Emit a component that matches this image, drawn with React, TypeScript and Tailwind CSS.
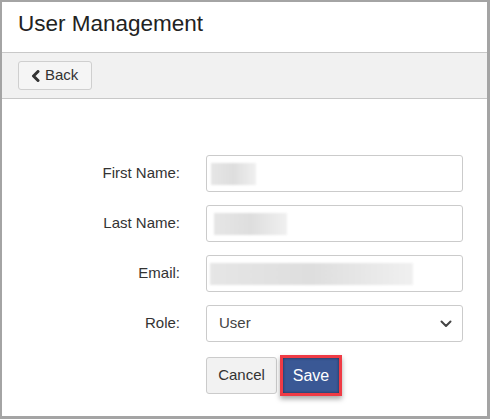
export default function App() {
  const rows = [
    { label: "First Name:", blur: "ml-[4px] w-[45px]" },
    { label: "Last Name:", blur: "ml-[7px] w-[73px]" },
    { label: "Email:", blur: "ml-[3px] w-[203px]" },
  ];

  return (
    <div
      className="w-[490px] h-[419px] bg-white border-[#a4a4a4] border-t-2 border-l-2 border-r-[3px] border-b-[3px] flex flex-col text-[#333]"
      style={{ fontFamily: '"Liberation Sans", Arial, sans-serif' }}
    >
      {/* Header */}
      <header className="h-[51px] shrink-0 flex items-center pl-4 border-b border-[#c8c8c8]">
        <h1 className="text-[22.5px] text-[#222] leading-none -mt-[5px]">User Management</h1>
      </header>

      {/* Toolbar */}
      <div className="h-[46px] shrink-0 bg-[#f1f1f1] border-b border-[#c8c8c8] flex items-center pl-4">
        <button className="h-[29px] px-[13px] flex items-center gap-[5px] bg-[#f5f5f5] border border-[#cfcfcf] rounded-[3px] text-[15px] text-[#333]">
          <svg width="9" height="12" viewBox="0 0 9 12" className="-ml-[1px]">
            <path d="M7 1.5 L2.5 6 L7 10.5" fill="none" stroke="#333" strokeWidth="3" strokeLinecap="round" strokeLinejoin="round" />
          </svg>
          Back
        </button>
      </div>

      {/* Form */}
      <div className="pt-[56px] flex flex-col gap-[13px]">
        {rows.map((row) => (
          <div key={row.label} className="flex items-center h-[37px]">
            <label className="w-[178px] text-right text-[15px] text-[#333]">{row.label}</label>
            <div className="ml-[26px] w-[257px] h-[37px] border border-[#cbcbcb] rounded-[3px] flex items-center">
              <div className={`h-[22px] ${row.blur} bg-gradient-to-r from-[#e6e6e6] via-[#dedede] to-[#f0f0f0] blur-[1px]`} />
            </div>
          </div>
        ))}

        <div className="flex items-center h-[37px]">
          <label className="w-[178px] text-right text-[15px] text-[#333]">Role:</label>
          <div className="ml-[26px] w-[257px] h-[37px] border border-[#cbcbcb] rounded-[3px] flex items-center justify-between pl-[12px] pr-[10px]">
            <span className="text-[15px] text-[#444]">User</span>
            <svg width="12" height="8" viewBox="0 0 12 8">
              <path d="M1.5 1.5 L6 6 L10.5 1.5" fill="none" stroke="#444" strokeWidth="2" strokeLinecap="round" strokeLinejoin="round" />
            </svg>
          </div>
        </div>

        <div className="flex items-center pl-[204px] gap-[3px]">
          <button className="h-[37px] w-[71px] bg-[#f2f2f2] border border-[#cbcbcb] rounded-[3px] text-[15px] text-[#333]">
            Cancel
          </button>
          <div className="border-[3px] border-[#ef3b45] shadow-[0_3px_5px_rgba(0,0,0,0.35)]">
            <button className="h-[35px] w-[56px] bg-[#3a5895] shadow-[inset_0_0_3px_rgba(0,0,0,0.5)] text-white text-[16px]">
              Save
            </button>
          </div>
        </div>
      </div>
    </div>
  );
}
